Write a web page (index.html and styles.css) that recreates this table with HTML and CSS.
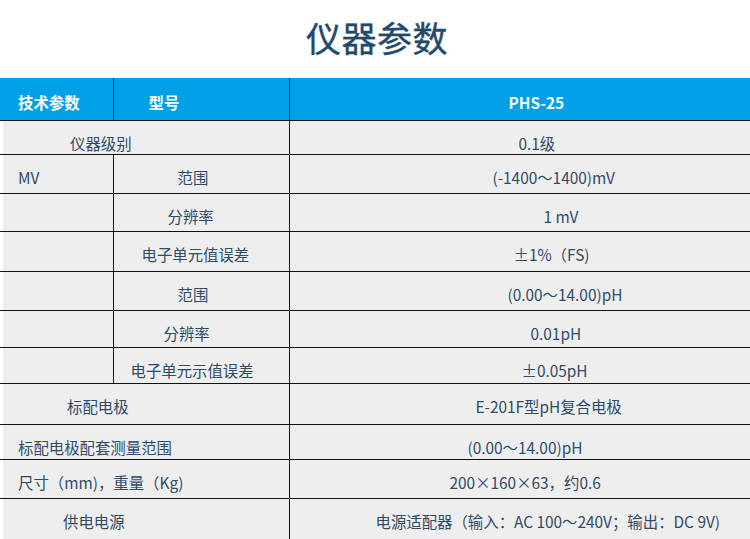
FILE: index.html
```html
<!DOCTYPE html>
<html lang="zh-CN">
<head>
<meta charset="utf-8">
<title>仪器参数</title>
<link rel="stylesheet" href="styles.css">
</head>
<body>
<h1 class="title">仪器参数</h1>
<table class="spec">
  <colgroup>
    <col class="c1"><col class="c2"><col class="c3">
  </colgroup>
  <thead>
    <tr class="h42">
      <th class="first i18">技术参数</th>
      <th class="i35">型号</th>
      <th class="i219">PHS-25</th>
    </tr>
  </thead>
  <tbody>
    <tr class="h34"><td class="first i70" colspan="2">仪器级别</td><td class="i229">0.1级</td></tr>
    <tr class="h39"><td class="first i18">MV</td><td class="i64">范围</td><td class="i203">(-1400～1400)mV</td></tr>
    <tr class="h38"><td class="first"></td><td class="i54">分辨率</td><td class="i254">1 mV</td></tr>
    <tr class="h40"><td class="first"></td><td class="i28">电子单元值误差</td><td class="i224">±1%（FS)</td></tr>
    <tr class="h39"><td class="first"></td><td class="i64">范围</td><td class="i218">(0.00～14.00)pH</td></tr>
    <tr class="h37"><td class="first"></td><td class="i50">分辨率</td><td class="i241">0.01pH</td></tr>
    <tr class="h36"><td class="first"></td><td class="i17">电子单元示值误差</td><td class="i232">±0.05pH</td></tr>
    <tr class="h41"><td class="first i67" colspan="2">标配电极</td><td class="i186">E-201F型pH复合电极</td></tr>
    <tr class="h35"><td class="first i18" colspan="2">标配电极配套测量范围</td><td class="i178">(0.00～14.00)pH</td></tr>
    <tr class="h39"><td class="first i18" colspan="2">尺寸（mm)，重量（Kg)</td><td class="i160">200×160×63，约0.6</td></tr>
    <tr class="h41"><td class="first i63" colspan="2">供电电源</td><td class="i86">电源适配器（输入：AC 100～240V；输出：DC 9V)</td></tr>
  </tbody>
</table>
</body>
</html>
```

FILE: styles.css
```css
* { box-sizing: border-box; }
html, body { margin: 0; padding: 0; background: #fff; }
body {
  width: 750px;
  font-family: "Noto Sans CJK SC", "Noto Sans", sans-serif;
  color: #2e4b68;
}
.title {
  margin: 0;
  height: 78px;
  padding-top: 15px;
  padding-left: 4px;
  text-align: center;
  font-size: 35px;
  line-height: 44px;
  font-weight: 400;
  color: #1f4a6c;
  letter-spacing: 0.5px;
  -webkit-text-stroke: 0.4px #1f4a6c;
}
.spec {
  width: 750px;
  border-collapse: collapse;
  table-layout: fixed;
  font-size: 15.4px;
  line-height: 20px;
}
.c1 { width: 113px; }
.c2 { width: 176px; }
.c3 { width: 461px; }

.spec th, .spec td {
  border: 1px solid #111;
  vertical-align: top;
  text-align: left;
  white-space: nowrap;
  padding-top: 12px;
  padding-bottom: 0;
  padding-right: 0;
}
.spec th {
  background: #00a0e9;
  color: #fff;
  font-weight: 700;
  border-top: none;
  padding-top: 14px;
}
.spec td { background: #eeeeee; }
.spec tr > :first-child { border-left: none; }
.spec tr > :last-child { border-right: none; }
.spec tbody tr:last-child td { border-bottom: none; }
.spec td.first { box-shadow: inset 3px 0 0 #fff; }

.h42 { height: 42px; }
.h41 { height: 41px; }
.h40 { height: 40px; }
.h39 { height: 39px; }
.h38 { height: 38px; }
.h37 { height: 37px; }
.h36 { height: 36px; }
.h35 { height: 35px; }
.h34 { height: 34px; }

.i17 { padding-left: 17px; }
.i18 { padding-left: 18px; }
.i28 { padding-left: 28px; }
.i35 { padding-left: 35px; }
.i50 { padding-left: 50px; }
.i54 { padding-left: 54px; }
.i63 { padding-left: 63px; }
.i64 { padding-left: 64px; }
.i67 { padding-left: 67px; }
.i70 { padding-left: 70px; }
.i86 { padding-left: 86px; }
.i160 { padding-left: 160px; }
.i178 { padding-left: 178px; }
.i186 { padding-left: 186px; }
.i203 { padding-left: 203px; }
.i218 { padding-left: 218px; }
.i219 { padding-left: 219px; }
.i224 { padding-left: 224px; }
.i229 { padding-left: 229px; }
.i232 { padding-left: 232px; }
.i241 { padding-left: 241px; }
.i254 { padding-left: 254px; }
```
